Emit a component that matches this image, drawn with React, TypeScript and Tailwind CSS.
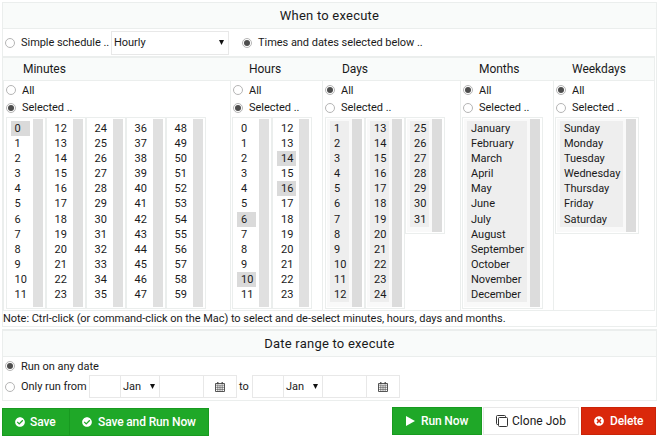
import React from "react";
import { FaCheckCircle, FaTimesCircle } from "react-icons/fa";

const range = (from: number, to: number) =>
  Array.from({ length: to - from + 1 }, (_, i) => String(from + i));

function Radio({ checked = false }: { checked?: boolean }) {
  return (
    <span className="flex size-[10px] shrink-0 items-center justify-center rounded-full border border-[#b5b5b5] bg-white">
      {checked && <span className="size-[6px] rounded-full bg-[#4d4d4d]" />}
    </span>
  );
}

type ListProps = {
  items: string[];
  width: string;
  selected?: string[];
  disabled?: boolean;
};

function List({ items, width, selected = [], disabled = false }: ListProps) {
  return (
    <div className={`flex shrink-0 border border-[#ebeeed] p-px pr-[2px] ${width}`}>
      <div className={`grow pt-[2px] pb-[5px] pl-[3px] pr-[3px] ${disabled ? "bg-[#f9f9f9]" : "bg-white"}`}>
        {items.map((item) => (
          <div
            key={item}
            className={`h-[15.1px] pl-[4px] leading-[15px] tracking-[-0.02px] ${
              disabled ? "bg-[#eeeeee]" : selected.includes(item) ? "bg-[#dadada]" : ""
            }`}
          >
            {item}
          </div>
        ))}
      </div>
      <div className={`w-[10px] shrink-0 ${disabled ? "bg-[#dcdcdc]" : "bg-[#e0e0e0]"}`} />
    </div>
  );
}

type ColumnProps = {
  all: boolean;
  width: string;
  children: React.ReactNode;
};

function Column({ all, width, children }: ColumnProps) {
  return (
    <div className={`shrink-0 border-l border-[#ebeeed] pl-[2px] ${width}`}>
      <div className="flex h-[18px] items-center gap-[6px]">
        <Radio checked={all} />
        All
      </div>
      <div className="flex h-[17px] items-center gap-[6px]">
        <Radio checked={!all} />
        Selected ..
      </div>
      <div className="-ml-px mt-px flex items-start">{children}</div>
    </div>
  );
}

function MonthSelect() {
  return (
    <div className="flex w-[39px] items-center justify-between border-r border-[#e8e8e8] pl-[2px] pr-[4px]">
      Jan
      <Caret />
    </div>
  );
}

function Caret() {
  return (
    <svg className="h-[5px] w-[5px]" viewBox="0 0 5 5">
      <path d="M0 0H5L2.5 5Z" fill="#111" />
    </svg>
  );
}

function Calendar() {
  return (
    <svg className="h-[10px] w-[10px]" viewBox="0 0 10 10" fill="none" stroke="#444" strokeWidth="0.9">
      <path d="M0.5 1.5H9.5V9.5H0.5Z" />
      <path d="M0.5 3.2H9.5M0.5 5.3H9.5M0.5 7.4H9.5M2.8 3.2V9.5M5 3.2V9.5M7.2 3.2V9.5" strokeWidth="0.6" />
      <path d="M2.8 0V2.3M7.2 0V2.3" strokeWidth="1.2" />
    </svg>
  );
}

function DateInput() {
  return (
    <div className="flex h-[23px] w-[148px] shrink-0 border border-[#e8e8e8] bg-white">
      <div className="w-[31px] border-r border-[#e8e8e8]" />
      <MonthSelect />
      <div className="w-[44px] border-r border-[#e8e8e8]" />
      <div className="flex grow items-center justify-center pt-px">
        <Calendar />
      </div>
    </div>
  );
}

function PanelTitle({ children }: { children: React.ReactNode }) {
  return (
    <div className="flex h-[26px] items-center justify-center border-b border-[#ebeeed] bg-[#f9fbfa] text-[13px] tracking-[0.22px]">
      {children}
    </div>
  );
}

export default function App() {
  return (
    <div className="h-[446px] w-[658px] overflow-hidden bg-white pl-[2px] pt-[2px] font-[Roboto,sans-serif] text-[11px] leading-[15px] tracking-[-0.04px] text-[#1a1a1a]">
      <div className="h-[325px] w-[655px] border border-[#ebeeed]">
        <PanelTitle>When to execute</PanelTitle>
        <div className="flex h-[27px] items-center whitespace-nowrap pl-[2px]">
          <Radio />
          <span className="ml-[6px] w-[90px] shrink-0">Simple schedule ..</span>
          <div className="flex h-[24px] w-[118px] items-center justify-between border border-[#e8e8e8] pl-[2px] pr-[4px]">
            Hourly
            <Caret />
          </div>
          <span className="ml-[13px] mr-[6px]">
            <Radio checked />
          </span>
          Times and dates selected below ..
        </div>
        <div className="h-[255px] w-[652px] border-b border-r border-t-2 border-[#ebeeed]">
          <div className="flex h-[23px] items-center border-b border-[#ebeeed] bg-[#f9fbfa] text-[12px]">
            <span className="ml-[20px] w-[226px]">Minutes</span>
            <span className="w-[93px]">Hours</span>
            <span className="w-[137px]">Days</span>
            <span className="w-[93px]">Months</span>
            <span>Weekdays</span>
          </div>
          <div className="flex h-[229px]">
            <Column all={false} width="w-[227px]">
              <div className="flex pl-[0.5px]">
                <List items={range(0, 11)} width="w-[40px]" selected={["0"]} />
                <List items={range(12, 23)} width="w-[40px]" />
                <List items={range(24, 35)} width="w-[40px]" />
                <List items={range(36, 47)} width="w-[40px]" />
                <List items={range(48, 59)} width="w-[40px]" />
              </div>
            </Column>
            <Column all={false} width="w-[92px]">
              <List items={range(0, 11)} width="w-[40px]" selected={["6", "10"]} />
              <List items={range(12, 23)} width="w-[40px]" selected={["14", "16"]} />
            </Column>
            <Column all width="w-[138px]">
              <div className="flex items-start pl-px">
                <List items={range(1, 12)} width="w-[40px]" disabled />
                <List items={range(13, 24)} width="w-[40px]" disabled />
                <List items={range(25, 31)} width="w-[40px]" disabled />
              </div>
            </Column>
            <Column all width="w-[93px]">
              <List
                items={["January", "February", "March", "April", "May", "June", "July", "August", "September", "October", "November", "December"]}
                width="w-[81px]"
                disabled
              />
            </Column>
            <Column all width="w-[99px]">
              <List
                items={["Sunday", "Monday", "Tuesday", "Wednesday", "Thursday", "Friday", "Saturday"]}
                width="w-[84px]"
                disabled
              />
            </Column>
          </div>
        </div>
        <div className="whitespace-nowrap">
          Note: Ctrl-click (or command-click on the Mac) to select and de-select minutes, hours, days and months.
        </div>
      </div>

      <div className="mt-[2px] h-[72px] w-[655px] border border-t-2 border-[#ebeeed]">
        <PanelTitle>Date range to execute</PanelTitle>
        <div className="flex h-[18px] items-center gap-[6px] pl-[2px]">
          <Radio checked />
          Run on any date
        </div>
        <div className="flex h-[23px] items-center whitespace-nowrap pl-[2px]">
          <Radio />
          <span className="ml-[6px] w-[68px] shrink-0">Only run from</span>
          <DateInput />
          <span className="w-[15px] pl-[2px]">to</span>
          <DateInput />
        </div>
      </div>

      <div className="mt-[6px] flex w-[654px] items-start whitespace-nowrap text-[12px] font-medium tracking-[-0.13px]">
        <div className="mt-px flex h-[28px] text-white">
          <button className="flex w-[68px] items-center border border-[#189a20] bg-[#1fa828] pl-[12px]">
            <FaCheckCircle className="mr-[5px] size-[10px]" />
            Save
          </button>
          <button className="flex w-[139px] items-center border border-l-0 border-[#189a20] bg-[#1fa828] pl-[12px]">
            <FaCheckCircle className="mr-[6px] size-[10px]" />
            Save and Run Now
          </button>
        </div>
        <button className="ml-auto flex h-[28px] w-[90px] items-center border border-[#189a20] bg-[#1fa828] pl-[13px] text-white">
          <svg className="mr-[6px] h-[10px] w-[9px]" viewBox="0 0 9 10">
            <path d="M0 0L9 5L0 10Z" fill="white" />
          </svg>
          Run Now
        </button>
        <button className="ml-px flex h-[28px] w-[96px] items-center border border-[#e8e8e8] bg-white pl-[12px] font-normal tracking-[0.02px]">
          <svg className="mr-[4px] size-[12px]" viewBox="0 0 12 12" fill="none" stroke="#333">
            <path d="M2.5 9.5H1.5Q0.5 9.5 0.5 8.5V1.5Q0.5 0.5 1.5 0.5H8.5Q9.5 0.5 9.5 1.5V2.5" />
            <rect x="2.5" y="2.5" width="9" height="9" rx="1" />
          </svg>
          Clone Job
        </button>
        <button className="ml-[2px] flex h-[28px] w-[75px] items-center border border-[#c92408] bg-[#da280b] pl-[12px] text-white">
          <FaTimesCircle className="mr-[6px] size-[10px]" />
          Delete
        </button>
      </div>
    </div>
  );
}
